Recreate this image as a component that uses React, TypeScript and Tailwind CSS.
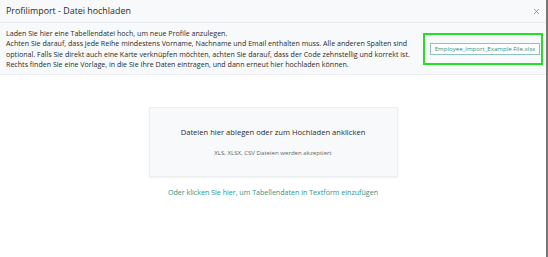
import { X } from "lucide-react"

export default function App() {
  return (
    <div className="flex h-[257px] w-[548px] overflow-hidden bg-white font-['Open_Sans',sans-serif] text-[#333]">
      <div className="flex min-w-0 flex-1 flex-col">
        <div className="flex h-[23px] shrink-0 items-center justify-between border-b border-[#e9ebee] bg-[#f8f9fa] pl-[6px] pr-[5px]">
          <span className="text-[8.9px] text-[#2b2b2b]">Profilimport - Datei hochladen</span>
          <X className="h-[9px] w-[9px] text-[#666]" strokeWidth={1.6} />
        </div>
        <div className="flex h-[52px] shrink-0 items-center justify-between border-b border-[#eceef1] bg-[#f8f9fa] pl-[6px] pr-[3px]">
          <p className="whitespace-nowrap text-[7.1px] leading-[10.3px] text-[#2b2b2b]">
            Laden Sie hier eine Tabellendatei hoch, um neue Profile anzulegen.
            <br />
            Achten Sie darauf, dass jede Reihe mindestens Vorname, Nachname und Email enthalten muss. Alle anderen Spalten sind
            <br />
            optional. Falls Sie direkt auch eine Karte verknüpfen möchten, achten Sie darauf, dass der Code zehnstellig und korrekt ist.
            <br />
            Rechts finden Sie eine Vorlage, in die Sie Ihre Daten eintragen, und dann erneut hier hochladen können.
          </p>
          <div className="flex h-[32px] w-[120px] shrink-0 items-center justify-end border-2 border-[#22e022] pr-[1px]">
            <button className="h-[12px] w-[110px] whitespace-nowrap border border-[#8cc4bd] bg-white text-[6.1px] leading-[10px] text-[#2f8f86]">
              Employee_Import_Example File.xlsx
            </button>
          </div>
        </div>
        <div className="flex flex-1 flex-col items-center pt-[32px]">
          <div className="flex h-[70px] w-[249px] flex-col items-center justify-center gap-[9px] border border-[#eceef0] bg-[#f8f9fa] shadow-[0_1px_2px_rgba(0,0,0,0.06)]">
            <span className="text-[7.6px] text-[#2b2b2b]">Dateien hier ablegen oder zum Hochladen anklicken</span>
            <span className="text-[6.1px] text-[#666]">XLS, XLSX, CSV Dateien werden akzeptiert</span>
          </div>
          <a className="mt-[10px] text-[7.1px] text-[#2f9488]">Oder klicken Sie hier, um Tabellendaten in Textform einzufügen</a>
        </div>
      </div>
      <div className="w-[2px] bg-[#777]" />
    </div>
  )
}
